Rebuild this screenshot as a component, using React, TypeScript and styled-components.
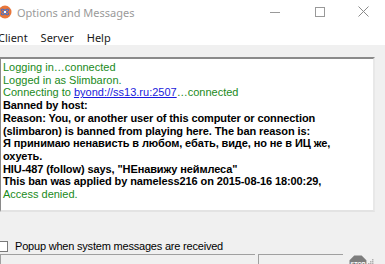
import styled, { createGlobalStyle } from 'styled-components';

const GlobalStyle = createGlobalStyle`
  html, body {
    margin: 0;
    padding: 0;
    width: 385px;
    height: 264px;
    overflow: hidden;
    background: #f0f0f0;
  }
`;

const Window = styled.div`
  display: flex;
  flex-direction: column;
  width: 385px;
  height: 264px;
  overflow: hidden;
  background: #f0f0f0;
  font-family: 'Liberation Sans', Arial, sans-serif;
`;

const TitleBar = styled.div`
  display: flex;
  align-items: center;
  height: 27px;
  background: #ffffff;
  margin-left: -2px;
`;

const AppIcon = styled.svg`
  width: 14px;
  height: 14px;
  margin-right: 5px;
  margin-top: -2px;
  flex-shrink: 0;
`;

const Title = styled.span`
  font-family: 'Noto Sans', 'Open Sans', sans-serif;
  font-size: 11px;
  color: #9a9a9a;
  flex: 1;
  margin-top: -2px;
`;

const ControlButton = styled.div<{ $w: number }>`
  display: flex;
  align-items: center;
  justify-content: center;
  width: ${(p) => p.$w}px;
  height: 27px;
  margin-top: -3px;
`;

const MenuBar = styled.div`
  display: flex;
  align-items: center;
  box-sizing: border-box;
  height: 19px;
  background: #ffffff;
  margin-left: -2px;
  padding-top: 3px;
`;

const MenuItem = styled.span`
  font-family: 'Noto Sans', 'Open Sans', sans-serif;
  font-size: 11px;
  color: #1a1a1a;
  margin-right: 13px;
`;

const Body = styled.div`
  display: flex;
  flex-direction: column;
  padding: 12px 10px 0 0;
  flex: 1;
`;

const Output = styled.div`
  height: 149px;
  background: #ffffff;
  border-top: 2px solid #8a8a8a;
  border-left: 1px solid #8a8a8a;
  border-right: 2px solid #e8e8e8;
  border-bottom: 2px solid #e3e3e3;
  padding: 2px 0 0 2px;
  font-size: 11px;
  line-height: 12.7px;
  white-space: nowrap;
  overflow: hidden;
`;

const Line = styled.div<{ $green?: boolean; $bold?: boolean }>`
  color: ${(p) => (p.$green ? '#1a8a1a' : '#000000')};
  font-weight: ${(p) => (p.$bold ? 700 : 400)};
  letter-spacing: ${(p) => (p.$bold ? '-0.1px' : '0')};
`;

const LinkText = styled.span`
  color: #1a1adc;
  text-decoration: underline;
`;

const CheckRow = styled.label`
  display: flex;
  align-items: center;
  margin-top: 27px;
  margin-left: -3px;
  height: 14px;
  font-size: 11px;
  letter-spacing: -0.2px;
  color: #000000;
`;

const CheckBox = styled.span`
  width: 11px;
  height: 11px;
  border: 1px solid #7a7a7a;
  background: #ffffff;
  margin-right: 7px;
  box-sizing: border-box;
`;

const StatusBar = styled.div`
  display: flex;
  align-items: flex-start;
  margin-top: 1px;
  height: 10px;
`;

const StatusPanel = styled.div<{ $w: number }>`
  width: ${(p) => p.$w}px;
  height: 10px;
  border-top: 1px solid #a0a0a0;
  border-left: 1px solid #a0a0a0;
  margin-right: 3px;
`;

const StopIcon = styled.svg`
  width: 18px;
  height: 18px;
  margin-left: 3px;
  margin-top: 1px;
`;

const Grip = styled.svg`
  margin-left: auto;
  margin-right: 1px;
  margin-top: 4px;
  width: 7px;
  height: 7px;
`;

export default function App() {
  return (
    <>
      <GlobalStyle />
      <Window>
        <TitleBar>
          <AppIcon viewBox="0 0 14 14">
            <circle cx="7" cy="7" r="6.5" fill="#e8763a" />
            <ellipse cx="7" cy="7" rx="4.5" ry="1.6" fill="none" stroke="#3a6fd0" strokeWidth="0.9" transform="rotate(35 7 7)" />
            <ellipse cx="7" cy="7" rx="4.5" ry="1.6" fill="none" stroke="#3a6fd0" strokeWidth="0.9" transform="rotate(-35 7 7)" />
            <circle cx="7" cy="7" r="1.2" fill="#ffffff" />
          </AppIcon>
          <Title>Options and Messages</Title>
          <ControlButton $w={46}>
            <svg width="10" height="10" viewBox="0 0 10 10">
              <line x1="0" y1="5.5" x2="10" y2="5.5" stroke="#999" strokeWidth="1" />
            </svg>
          </ControlButton>
          <ControlButton $w={43}>
            <svg width="10" height="10" viewBox="0 0 10 10">
              <rect x="0.5" y="0.5" width="9" height="9" fill="none" stroke="#999" strokeWidth="1" />
            </svg>
          </ControlButton>
          <ControlButton $w={44}>
            <svg width="11" height="11" viewBox="0 0 11 11">
              <path d="M0.5 0.5 L10.5 10.5 M10.5 0.5 L0.5 10.5" stroke="#8a8a8a" strokeWidth="1" />
            </svg>
          </ControlButton>
        </TitleBar>
        <MenuBar>
          <MenuItem>Client</MenuItem>
          <MenuItem>Server</MenuItem>
          <MenuItem>Help</MenuItem>
        </MenuBar>
        <Body>
          <Output>
            <Line $green>Logging in…connected</Line>
            <Line $green>Logged in as Slimbaron.</Line>
            <Line $green>
              Connecting to <LinkText>byond://ss13.ru:2507</LinkText>…connected
            </Line>
            <Line $bold>Banned by host:</Line>
            <Line $bold>Reason: You, or another user of this computer or connection</Line>
            <Line $bold>(slimbaron) is banned from playing here. The ban reason is:</Line>
            <Line $bold>Я принимаю ненависть в любом, ебать, виде, но не в ИЦ же,</Line>
            <Line $bold>охуеть.</Line>
            <Line $bold>HIU-487 (follow) says, "НEнавижу неймлеса"</Line>
            <Line $bold>This ban was applied by nameless216 on 2015-08-16 18:00:29,</Line>
            <Line $green>Access denied.</Line>
          </Output>
          <CheckRow>
            <CheckBox />
            Popup when system messages are received
          </CheckRow>
          <StatusBar>
            <StatusPanel $w={255} />
            <StatusPanel $w={85} />
            <StopIcon viewBox="0 0 18 18">
              <polygon points="5.3,0.5 12.7,0.5 17.5,5.3 17.5,12.7 12.7,17.5 5.3,17.5 0.5,12.7 0.5,5.3" fill="#7d7d7d" />
              <text x="9" y="11.5" fontSize="5.5" fontFamily="'Liberation Sans', Arial, sans-serif" fontWeight="700" fill="#ffffff" textAnchor="middle">STOP</text>
            </StopIcon>
            <Grip viewBox="0 0 7 7">
              <rect x="5" y="1" width="1.5" height="1.5" fill="#b0b0b0" />
              <rect x="3" y="3" width="1.5" height="1.5" fill="#b0b0b0" />
              <rect x="5" y="3" width="1.5" height="1.5" fill="#b0b0b0" />
              <rect x="1" y="5" width="1.5" height="1.5" fill="#b0b0b0" />
              <rect x="3" y="5" width="1.5" height="1.5" fill="#b0b0b0" />
              <rect x="5" y="5" width="1.5" height="1.5" fill="#b0b0b0" />
            </Grip>
          </StatusBar>
        </Body>
      </Window>
    </>
  );
}
